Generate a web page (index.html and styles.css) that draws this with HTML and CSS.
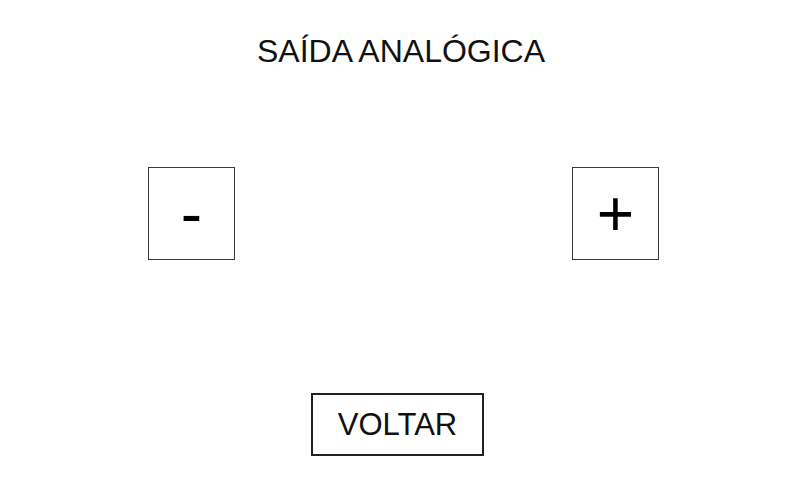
FILE: index.html
```html
<!DOCTYPE html>
<html lang="pt">
<head>
<meta charset="utf-8">
<title>Saída Analógica</title>
<link rel="stylesheet" href="styles.css">
</head>
<body>
<main class="screen">
  <h1 class="title">SAÍDA ANALÓGICA</h1>
  <div class="controls">
    <button class="step">-</button>
    <button class="step">+</button>
  </div>
  <button class="back">VOLTAR</button>
</main>
</body>
</html>
```
FILE: styles.css
```css
html, body {
  margin: 0;
  padding: 0;
  background: #ffffff;
}
.screen {
  width: 800px;
  height: 480px;
  display: flex;
  flex-direction: column;
  align-items: flex-start;
  font-family: "Liberation Sans", Arial, sans-serif;
  color: #111111;
  box-sizing: border-box;
  padding-top: 33px;
}
.title {
  align-self: stretch;
  margin: 0;
  font-size: 32px;
  font-weight: normal;
  text-align: center;
  padding-left: 2px;
  line-height: 37px;
}
.controls {
  margin-top: 97px;
  margin-left: 148px;
  display: flex;
  gap: 337px;
}
.step {
  box-sizing: border-box;
  width: 87px;
  height: 93px;
  border: 1px solid #3a3a3a;
  background: #ffffff;
  color: #000000;
  font-family: "Liberation Sans", Arial, sans-serif;
  font-size: 64px;
  line-height: 1;
  padding: 0;
  display: flex;
  align-items: center;
  justify-content: center;
}
.back {
  box-sizing: border-box;
  margin-top: 133px;
  margin-left: 311px;
  width: 173px;
  height: 63px;
  border: 2px solid #222222;
  background: #ffffff;
  color: #111111;
  font-family: "Liberation Sans", Arial, sans-serif;
  font-size: 31px;
  padding: 0;
  display: flex;
  align-items: center;
  justify-content: center;
}
```
